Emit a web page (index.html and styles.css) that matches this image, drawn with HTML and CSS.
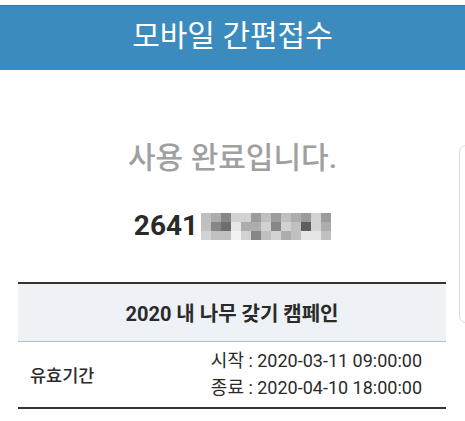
FILE: index.html
```html
<!DOCTYPE html>
<html lang="ko">
<head>
    <meta charset="UTF-8">
    <meta name="viewport" content="width=device-width, initial-scale=1.0">
    <title>모바일 간편접수</title>
    <link rel="stylesheet" href="styles.css">
</head>
<body>
    <div class="page">
        <header class="top-bar">
            <h1>모바일 간편접수</h1>
        </header>

        <div class="status">
            <p class="status-msg">사용 완료입니다.</p>
            <div class="code">
                <span class="code-num">2641</span>
                <div class="mosaic">
                    <i class="g3"></i><i class="g4"></i><i class="g6"></i><i class="g2"></i><i class="g2"></i><i class="g5"></i><i class="g3"></i><i class="g5"></i><i class="g3"></i><i class="g4"></i><i class="g5"></i><i class="g2"></i><i class="g5"></i>
                    <i class="g3"></i><i class="g6"></i><i class="g7"></i><i class="g1"></i><i class="g4"></i><i class="g4"></i><i class="g2"></i><i class="g6"></i><i class="g2"></i><i class="g3"></i><i class="g8"></i><i class="g2"></i><i class="g4"></i>
                    <i class="g2"></i><i class="g3"></i><i class="g3"></i><i class="g0"></i><i class="g2"></i><i class="g6"></i><i class="g3"></i><i class="g2"></i><i class="g4"></i><i class="g3"></i><i class="g1"></i><i class="g1"></i><i class="g3"></i>
                </div>
            </div>
        </div>

        <table class="coupon">
            <thead>
                <tr>
                    <th colspan="2">2020 내 나무 갖기 캠페인</th>
                </tr>
            </thead>
            <tbody>
                <tr>
                    <td class="label">유효기간</td>
                    <td class="period">
                        <div>시작 : 2020-03-11 09:00:00</div>
                        <div>종료 : 2020-04-10 18:00:00</div>
                    </td>
                </tr>
            </tbody>
        </table>
    </div>

    <div class="scroll-hint"></div>
</body>
</html>
```

FILE: styles.css
```css
body {
    margin: 0;
    background: #fff;
    font-family: Roboto, "Noto Sans CJK KR", sans-serif;
    color: #222;
    overflow: hidden;
}
.page {
    padding-top: 5px;
}
.top-bar {
    background-color: #3c8bbf;
    border-top: 1px solid #3a7aa6;
    height: 64px;
    display: flex;
    justify-content: center;
    align-items: center;
}
.top-bar h1 {
    margin: 0 0 5px;
    color: #fff;
    font-size: 30px;
    font-weight: 400;
    line-height: 1;
}
.status {
    display: flex;
    flex-direction: column;
    align-items: center;
    padding-top: 70px;
}
.status-msg {
    margin: 0;
    font-size: 30px;
    font-weight: 500;
    line-height: 36px;
    color: #a0a0a0;
}
.code {
    display: flex;
    align-items: center;
    margin-top: 36px;
}
.code-num {
    font-size: 28px;
    font-weight: 700;
    color: #2a2a2a;
    line-height: 1;
    margin-right: 3px;
}
.mosaic {
    display: grid;
    grid-template-columns: repeat(13, 10px);
    grid-auto-rows: 9px;
}
.mosaic i { display: block; }
.g0 { background: #f2f2f2; }
.g1 { background: #e6e6e6; }
.g2 { background: #d2d2d2; }
.g3 { background: #c0c0c0; }
.g4 { background: #adadad; }
.g5 { background: #9c9c9c; }
.g6 { background: #878787; }
.g7 { background: #6e6e6e; }
.g8 { background: #5e5e5e; }

.coupon {
    width: 428px;
    margin: 42px 0 0 18px;
    border-collapse: collapse;
    border-top: 2px solid #333;
    border-bottom: 2px solid #333;
}
.coupon th {
    background: #eef1f5;
    height: 57px;
    padding: 0;
    font-size: 20px;
    font-weight: 700;
    color: #2a2a2a;
    border-bottom: 1px solid #bbb;
}
.coupon td {
    padding: 5px 0 6px;
    font-size: 18px;
    color: #2a2a2a;
}
.coupon .label {
    padding-left: 12px;
    font-size: 17.5px;
    font-weight: 500;
}
.coupon .period {
    text-align: right;
    padding-right: 24px;
    line-height: 27px;
}
.scroll-hint {
    position: absolute;
    left: 459px;
    top: 145px;
    width: 20px;
    height: 176px;
    border: 1px solid #dcdcdc;
    border-radius: 7px;
    background: #fff;
}
```
